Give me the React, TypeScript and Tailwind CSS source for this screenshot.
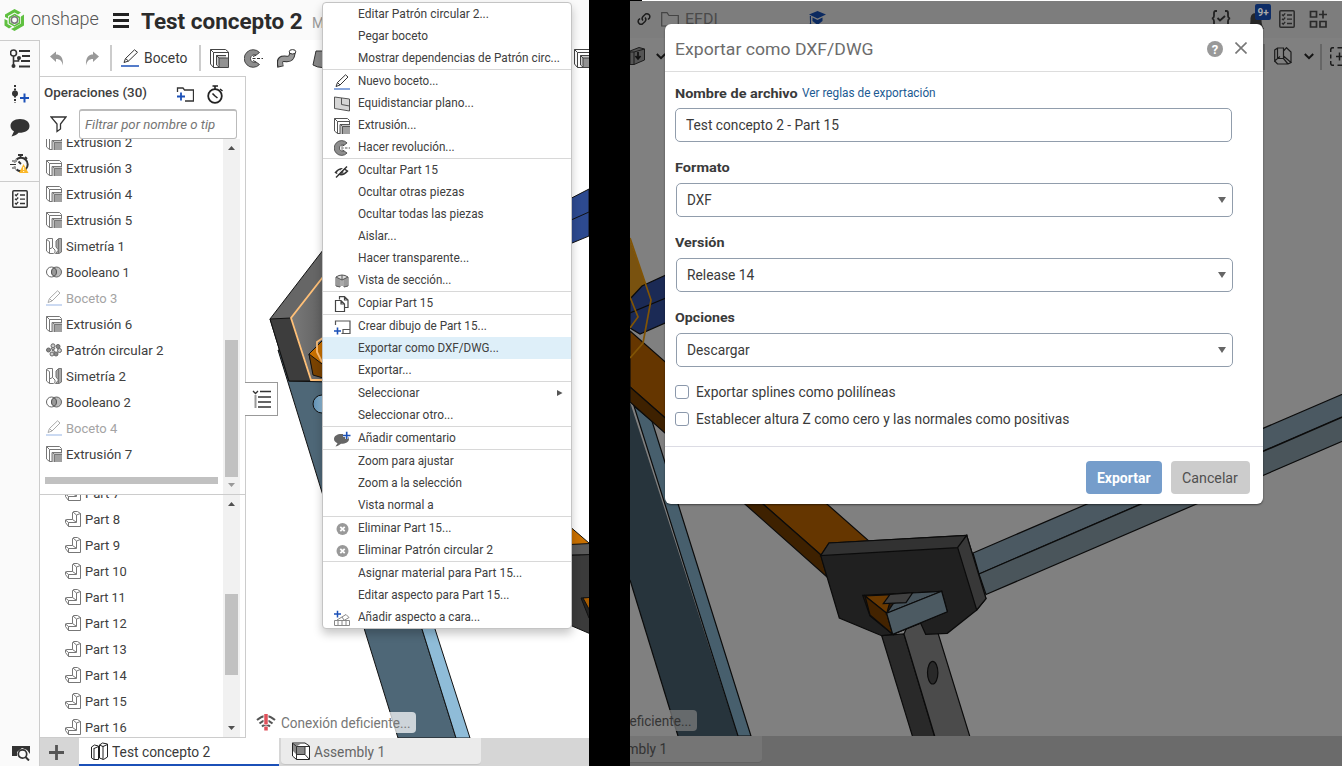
import { useLayoutEffect, useRef, useState } from 'react';
import type { ReactNode } from 'react';

/* Text squeezed or stretched horizontally to a given width. */
function T({ w, children, className = '' }: { w: number; children: ReactNode; className?: string }) {
  const ref = useRef<HTMLSpanElement>(null);
  const [scale, setScale] = useState(1);
  useLayoutEffect(() => {
    if (ref.current) setScale(w / ref.current.offsetWidth);
  }, [w]);
  return (
    <span className={`flex shrink-0 whitespace-nowrap ${className}`} style={{ width: w }}>
      <span ref={ref} className="block shrink-0 origin-left" style={{ transform: `scaleX(${scale})` }}>
        {children}
      </span>
    </span>
  );
}

function Svg({ size = 16, h, children, className = '' }: { size?: number; h?: number; children: ReactNode; className?: string }) {
  return (
    <svg width={size} height={h ?? size} viewBox={`0 0 ${size} ${h ?? size}`} fill="none" className={`shrink-0 ${className}`}>
      {children}
    </svg>
  );
}

const Extrude = ({ line = '#777' }: { line?: string }) => (
  <Svg>
    <path d="M.5 13V.5H13.500L15.500 2.500V6M3.500 15.500V3.500H15.500M.5 .5L3.500 3.500M.5 13L3.500 15.500H6" stroke={line} />
    <path d="M6 6H16V16H6Z" fill="#c4c4c4" />
    <path d="M8.500 8.500H16V16H8.500Z" fill="#a0a0a0" />
    <path d="M6 16V6.500H16M6 6L8.500 8.500M8.500 16V8.500H16" stroke={line} />
  </Svg>
);
const ExtrudeDark = () => (
  <Svg size={19}>
    <path d="M.5 15V.5H15.500L18.500 3V8M3.500 18.500V3.500H18.500M.5 .5L3.500 3.500M.5 15L3.500 18.500H18.500V8" stroke="#444" />
    <path d="M6 6H16V16H6Z" fill="#ccc" />
    <path d="M9 9H18V18H9Z" fill="#929292" />
    <path d="M6.500 16V6.500H16M6.500 6.500L9 9M9 18V9H18M6.500 16L9 18" stroke="#444" />
  </Svg>
);
const Mirror = () => (
  <Svg>
    <path d="M.5 13V1.500L2 .5H6.500V9.500L9 12V14.500L7.500 15.500H3.500L.5 13ZM.5 1.500L3.500 3.500V15.500M6.500 9.500L3.500 11" stroke="#777" />
    <path d="M10 3L12.500 .5H15.500V14L13 15.500H9.500L12.500 12L10 9Z" fill="#aaa" stroke="#777" />
    <path d="M12.500 1V15" stroke="#777" />
  </Svg>
);
const Bool = () => (
  <Svg>
    <circle cx="10.500" cy="8" r="5" fill="#bbb" stroke="#666" />
    <circle cx="5.500" cy="8" r="5" stroke="#666" />
    <path d="M8 3.700A5 5 0 0 1 8 12.300A5 5 0 0 1 8 3.700Z" fill="#999" stroke="#555" />
  </Svg>
);
const Pencil = ({ dark = false }: { dark?: boolean }) => (
  <Svg>
    <path d="M2 12.500L3.500 8.500L11.500.8L14 3L6 11Z M3.500 8.500L6 11" stroke={dark ? '#333' : '#aaa'} />
    <path d="M0 15H16" stroke={dark ? '#3b6cc4' : '#a9c1ea'} strokeWidth="1.200" />
  </Svg>
);
const Pattern = () => (
  <Svg>
    {[[7, 3.800], [12, 4.500], [13.500, 8.500], [10, 12], [6, 12], [2.500, 8]].map(([x, y], i) => (
      <circle key={i} cx={x} cy={y} r="2" fill={i % 2 ? '#888' : '#ccc'} stroke="#666" />
    ))}
    <path d="M5 6L9 10M9 6L6 9" stroke="#777" strokeWidth="1.500" />
  </Svg>
);
const PartIcon = () => (
  <Svg>
    <path d="M.5 9V11.500L3.500 15.500H15.500V2.500L12.500 .5H8.500L7.500 1.500V8.500H2L.5 9L3.500 11.500H11.500V4L15.500 2.500M11.500 4L8 1M3.500 11.500V15.500M7.500 8.500L11 11" stroke="#777" />
  </Svg>
);
const Revolve = ({ s = 16 }: { s?: number }) => (
  <svg width={s} height={s} viewBox="0 0 19 19" fill="none" className="shrink-0">
    <path d="M15.500 3.500A8.800 8.800 0 1 0 15.500 15.500L12 13A3.800 3.800 0 1 1 12 6.200Z" fill="#8d8d8d" stroke="#444" />
    <path d="M8.500 9.500H19" stroke="#333" strokeDasharray="3 1.500" />
    <path d="M9 7.500L12 6.200M9 11.500L12 13" stroke="#333" />
  </svg>
);

const icons: Record<string, () => ReactNode> = {
  ext: () => <Extrude />, mir: Mirror, boo: Bool, pen: () => <Pencil />, pat: Pattern,
};

const features: [string, string, number][] = [
  ['ext', 'Extrusión 2', 66], ['ext', 'Extrusión 3', 66], ['ext', 'Extrusión 4', 66], ['ext', 'Extrusión 5', 66],
  ['mir', 'Simetría 1', 59], ['boo', 'Booleano 1', 64], ['pen', 'Boceto 3', 51], ['ext', 'Extrusión 6', 66],
  ['pat', 'Patrón circular 2', 98], ['mir', 'Simetría 2', 60], ['boo', 'Booleano 2', 65], ['pen', 'Boceto 4', 51],
  ['ext', 'Extrusión 7', 66],
];

const menuIcons: Record<string, ReactNode> = {
  pencil: <Pencil dark />,
  plane: (
    <Svg>
      <path d="M.5 1L15.500 3V15L.5 12.500Z" fill="#d6d6d6" stroke="#555" />
      <path d="M7.500 2V8.500L15.500 10" stroke="#555" />
    </Svg>
  ),
  extrude: <Extrude line="#555" />,
  revolve: <Revolve />,
  hide: (
    <Svg size={15}>
      <path d="M1.500 8.500Q7 2 13.500 7Q8 13.500 1.500 8.500Z" stroke="#333" strokeWidth="1.500" />
      <circle cx="7.500" cy="8" r="2" fill="#555" />
      <path d="M1 12.500L12 2" stroke="#fff" strokeWidth="1.200" />
      <path d="M2 13.500L13 2.500" stroke="#333" strokeWidth="1.500" />
    </Svg>
  ),
  section: (
    <Svg>
      <path d="M2 13V4Q8 0 14 4V13L10 14V6L8 7L6 6V14Z" fill="#ddd" stroke="#555" />
      <path d="M2 4L6 6M14 4L10 6M4 5V13M12 5V13M8 2V7M8 7V13" stroke="#555" />
    </Svg>
  ),
  copy: (
    <Svg>
      <path d="M5.500 3.500V.7H10.500L14 4V11.500H10.500M10.500.7V4H14M1.500 4.500H7L10.500 8V15.500H1.500ZM7 4.500V8H10.500" stroke="#444" strokeWidth="1.200" />
    </Svg>
  ),
  drawing: (
    <Svg size={17}>
      <path d="M1.500 6V2H16V14.500H7.500M9 14V10.500H16" stroke="#555" strokeWidth="1.200" />
      <path d="M0 12H7M3.500 8.500V15.500" stroke="#1b50b8" strokeWidth="1.600" />
    </Svg>
  ),
  comment: (
    <Svg size={17}>
      <path d="M7.500 3C3 3 0 5 0 8C0 10 1.500 11.500 3.500 12.200L1.500 15.500C4.500 15 5.500 14 7 12.800C12 12.800 15 11 15 8C15 5 12 3 7.500 3Z" fill="#666" />
      <path d="M9 4.500H16.500M12.700 .8V8" stroke="#fff" strokeWidth="3" />
      <path d="M9 4.500H16.500M12.700 .8V8" stroke="#1b50b8" strokeWidth="1.600" />
    </Svg>
  ),
  del: (
    <Svg>
      <circle cx="8.500" cy="8" r="6" fill="#999" />
      <path d="M6.300 5.800L10.700 10.200M10.700 5.800L6.300 10.200" stroke="#fff" strokeWidth="1.800" />
    </Svg>
  ),
  aspect: (
    <Svg size={17}>
      <path d="M.5 10.500H15.500V15.500H.5ZM4 10.500V15.500M8 10.500V15.500M12 10.500V15.500M3 10L12 4.500L15 7.500L10 10.500M8 7L10 10" stroke="#888" />
      <path d="M0 4H7M3.500 .8V7.500" stroke="#1b50b8" strokeWidth="1.500" />
    </Svg>
  ),
};

type Item = [string, number, string?];
const menu: Item[][] = [
  [['Editar Patrón circular 2...', 131], ['Pegar boceto', 70], ['Mostrar dependencias de Patrón circ...', 202]],
  [['Nuevo boceto...', 80, 'pencil'], ['Equidistanciar plano...', 116, 'plane'], ['Extrusión...', 58, 'extrude'], ['Hacer revolución...', 97, 'revolve']],
  [['Ocultar Part 15', 80, 'hide'], ['Ocultar otras piezas', 106], ['Ocultar todas las piezas', 126], ['Aislar...', 39], ['Hacer transparente...', 111], ['Vista de sección...', 93, 'section']],
  [['Copiar Part 15', 75, 'copy']],
  [['Crear dibujo de Part 15...', 129, 'drawing'], ['Exportar como DXF/DWG...', 141], ['Exportar...', 54]],
  [['Seleccionar', 62], ['Seleccionar otro...', 95]],
  [['Añadir comentario', 98, 'comment']],
  [['Zoom para ajustar', 96], ['Zoom a la selección', 104], ['Vista normal a', 76]],
  [['Eliminar Part 15...', 93, 'del'], ['Eliminar Patrón circular 2', 135, 'del']],
  [['Asignar material para Part 15...', 164], ['Editar aspecto para Part 15...', 151], ['Añadir aspecto a cara...', 122, 'aspect']],
];

function ContextMenu() {
  return (
    <div className="absolute left-[322px] top-[2px] z-20 w-[250px] rounded-[4px] border border-[#c4c4c4] bg-white text-[13px] leading-[22px] text-[#404040] shadow-[0_5px_10px_rgba(0,0,0,.22)]">
      {menu.map((group, g) => (
        <div key={g} className={g ? 'border-t border-[#d8d8d8]' : ''}>
          {group.map(([label, w, icon]) => (
            <div key={label} className={`flex h-[22px] items-center pl-[11px] ${label.includes('DXF') ? 'bg-[#deeff9]' : ''}`}>
              <div className="flex w-[24px] shrink-0 pt-[2px]">{icon ? menuIcons[icon] : null}</div>
              <T w={w}>{label}</T>
              {label === 'Seleccionar' && (
                <Svg size={6} className="mr-[8px] ml-auto"><path d="M0 0L5.500 3L0 6Z" fill="#555" /></Svg>
              )}
            </div>
          ))}
        </div>
      ))}
    </div>
  );
}

function Scrollbar({ className, thumb, dim = false }: { className: string; thumb: string; dim?: boolean }) {
  return (
    <div className={`flex w-[17px] shrink-0 flex-col items-center bg-[#f1f1f1] ${className}`}>
      <Svg size={7} h={4}><path d="M0 4L3.500 0L7 4Z" fill="#505050" /></Svg>
      <div className={`w-[13px] bg-[#c1c1c1] ${thumb}`} />
      <Svg size={7} h={4} className="mt-auto"><path d="M0 0L3.500 4L7 0Z" fill={dim ? '#999' : '#505050'} /></Svg>
    </div>
  );
}

function LeftRail() {
  return (
    <aside className="flex w-[40px] shrink-0 flex-col items-center border-t border-r border-[#ccc] bg-[#fafafa]">
      <Svg size={20} h={19} className="mt-[8px]">
        <circle cx="3.500" cy="4" r="3" stroke="#333" strokeWidth="1.600" />
        <path d="M3.500 7V18M3.500 12H8.500V8" stroke="#333" strokeWidth="1.600" />
        <path d="M9 2H20M12 7H20M11 12H20M9 17.500H20" stroke="#333" strokeWidth="1.800" />
        <circle cx="3.500" cy="17" r="2" fill="#333" /><circle cx="9" cy="9" r="2" fill="#333" />
      </Svg>
      <Svg size={18} h={20} className="mt-[16px] ml-[1px]">
        <path d="M4 1V19" stroke="#333" strokeWidth="2" strokeDasharray="2 1.500" />
        <circle cx="4" cy="9.500" r="3" fill="#333" />
        <path d="M9 14H18M13.500 9.500V18.500" stroke="#1b50b8" strokeWidth="2" />
      </Svg>
      <Svg size={20} h={18} className="mt-[15px]">
        <path d="M10 0C4 0 .5 3 .5 7C.5 9.500 2 11.300 4 12.300L1.500 17.500C5 16.800 7 15.500 8.500 13.800C15 14 19.500 11.500 19.500 7C19.500 3 16 0 10 0Z" fill="#333" />
      </Svg>
      <Svg size={19} h={19} className="mt-[17px]">
        <circle cx="11" cy="10.500" r="6.700" stroke="#333" strokeWidth="2" />
        <path d="M8 1H13M10.500 1V4M15 3L17 5M11 10L8.500 7.500" stroke="#333" strokeWidth="1.800" />
        <path d="M1 7H7M0 10.500H7M1 14H7" stroke="#fafafa" strokeWidth="3" />
        <path d="M2 7H7M0 10.500H6M2 14H6" stroke="#333" strokeWidth="1.200" />
        <path d="M13.500 10L18.500 19H9Z" fill="#fbb829" /><path d="M13.700 13V16M13.700 17V18" stroke="#fff" />
      </Svg>
      <div className="mt-[8px] h-px w-full bg-[#ccc]" />
      <Checklist color="#333" className="mt-[8px]" />
      <Svg size={18} h={15} className="mt-auto mb-[5px] ml-[2px]">
        <path d="M0 0H18V8L15 4L10 2L5 6V10H0Z" fill="#333" />
        <circle cx="10.500" cy="8" r="4.200" stroke="#333" strokeWidth="1.700" fill="#fafafa" />
        <path d="M13.500 11L17 14.500" stroke="#333" strokeWidth="2" />
      </Svg>
    </aside>
  );
}

function Checklist({ color, className = '' }: { color: string; className?: string }) {
  return (
    <Svg size={16} h={18} className={className}>
      <rect x=".8" y=".8" width="14.400" height="16.400" rx="1" stroke={color} strokeWidth="1.500" />
      <path d="M3 4.500L4.200 5.700L6.200 3.300M3 8.700L4.200 9.900L6.200 7.500M3 13L4.200 14.200L6.200 11.800M8 5H13M8 9.200H13M8 13.500H13" stroke={color} strokeWidth="1.300" />
    </Svg>
  );
}

function FeaturePanel() {
  return (
    <section className="flex w-[206px] shrink-0 flex-col border-y border-r border-[#ccc] bg-white text-[13.500px] text-[#404040]">
      <div className="flex h-[32px] shrink-0 items-center pl-[4px] text-[13px] font-medium">
        <T w={103}>Operaciones (30)</T>
        <Svg size={18} h={15} className="mt-[3px] ml-[29px]">
          <path d="M1.500 5V1H7L8.500 3H17.500V14H9" stroke="#333" strokeWidth="1.300" />
          <path d="M1 9.500H9M5 5.500V13.500" stroke="#1b50b8" strokeWidth="1.800" />
        </Svg>
        <Svg size={17} h={19} className="mt-[2px] ml-[13px]">
          <circle cx="8" cy="11" r="6.800" stroke="#222" strokeWidth="1.800" />
          <path d="M5.500 1H11M8 1V4M13 4L15.500 6M8 11L5.500 8.500M8 11L10.500 13" stroke="#222" strokeWidth="1.600" />
        </Svg>
      </div>
      <div className="flex h-[30px] shrink-0 items-center pl-[10px]">
        <Svg size={17}><path d="M1 1H16L10.500 8V13L7 15.500V8Z" stroke="#333" strokeWidth="1.300" /></Svg>
        <div className="ml-[12px] flex h-[30px] w-[158px] items-center rounded-[3px] border border-t-2 border-[#bbb] pl-[5px] text-[13px] text-[#757575] italic">
          <T w={130}>Filtrar por nombre o tip</T>
        </div>
      </div>
      <div className="flex h-[356px] shrink-0 border-b border-[#ccc]">
        <div className="flex w-[183px] flex-col overflow-hidden">
          <div className="-mt-[10px]">
            {features.map(([icon, label, w]) => {
              const Icon = icons[icon];
              return (
                <div key={label} className={`flex h-[26px] items-center gap-[4px] pl-[6px] ${icon === 'pen' ? 'text-[#a4a4a4]' : ''}`}>
                  <Icon />
                  <T w={w}>{label}</T>
                </div>
              );
            })}
          </div>
          <div className="mt-[10px] ml-[5px] h-[7px] w-[173px] bg-[#c1c1c1]" />
        </div>
        <Scrollbar className="pt-[7px] pb-[7px]" thumb="h-[137px] mt-[190px]" dim />
      </div>
      <div className="flex h-[242px] shrink-0 overflow-hidden">
        <div className="w-[183px] overflow-hidden">
          <div className="-mt-[15px]">
            {[7, 8, 9, 10, 11, 12, 13, 14, 15, 16].map((n) => (
              <div key={n} className="flex h-[26px] items-center gap-[5px] pl-[25px]">
                <PartIcon />
                <T w={n < 10 ? 35 : n === 11 ? 41 : 42} className="-ml-[1px]">{`Part ${n}`}</T>
              </div>
            ))}
          </div>
        </div>
        <Scrollbar className="pt-[7px] pb-[7px]" thumb="h-[81px] mt-[88px]" />
      </div>
    </section>
  );
}

function LeftScene() {
  return (
    <svg viewBox="246 76 343 662" width="343" height="662" className="block" stroke="#111" strokeWidth="1">
      <defs>
        <linearGradient id="face" x1="0" x2="1"><stop offset="0" stopColor="#7a7a7a" /><stop offset="1" stopColor="#5c5c5c" /></linearGradient>
        <linearGradient id="hole" x1="0" x2="1"><stop offset="0" stopColor="#5f90b4" /><stop offset="1" stopColor="#b8dcf2" /></linearGradient>
      </defs>
      <path d="M320 350L422 629L456 738H398L278 350Z" fill="#4e6777" />
      <path d="M380 500L422 629L456 738H470L435 629L400 500Z" fill="#8fbcd8" />
      <circle cx="322" cy="404" r="9" fill="url(#hole)" />
      <path d="M270 319L330 241V382L289 381Z" fill="#666" />
      <path d="M270 319L291 318L311 381H289Z" fill="#3d3d3d" />
      <path d="M330 268L291 318L311 381H330Z" fill="url(#face)" stroke="none" />
      <path d="M330 333L309 354L313 372L330 380Z" fill="#c87000" />
      <path d="M309 354L330 370V380L313 375Z" fill="#7a4300" />
      <path d="M330 268L291 318L311 380H330M330 333L317 342V352L322 362" fill="none" stroke="#ffc078" strokeWidth="1.800" />
      <path d="M560 204L589 189V236L560 248Z" fill="#2d4a90" />
      <path d="M560 225L589 212" />
      <path d="M560 518L589 543V546H560Z" fill="#c97000" />
      <path d="M560 545L600 543V555H560Z" fill="#5b5b5b" />
      <path d="M560 556L600 554V638L572 626L560 620Z" fill="#3b3b3b" />
      <path d="M581 598L600 597V630L589 618Z" fill="#222" />
      <path d="M583 598L595 597V620Z" fill="#a85c00" />
    </svg>
  );
}

function LeftApp() {
  return (
    <div className="relative flex h-[766px] w-[589px] shrink-0 flex-col overflow-hidden bg-white">
      <header className="flex h-[40px] shrink-0 items-center bg-[#fafafa] pl-[4px]">
        <Svg size={21} h={22}>
          <path d="M10.500 0L1 5.500V8L4 9.500V7L10.500 3.500L14 5.500L17 3.500ZM20 5.500V16.500L10.500 22L7 20L10 18.500L17 14.500V7.500ZM.5 10V16.500L5 19.500L8 17.500L3.500 15V11.500Z" fill="#5fc040" />
          <path d="M10.500 5.500L15.500 8.500V14L10.500 16.800L5.500 14V8.500Z" stroke="#5fc040" strokeWidth="1.500" />
          <circle cx="10.500" cy="11" r="3.200" stroke="#777" strokeWidth="1.500" />
        </Svg>
        <T w={68} className="-mt-[2px] ml-[6px] text-[18.500px] leading-[22px] font-light text-[#555]">onshape</T>
        <div className="ml-[14px] flex flex-col gap-[3px]">
          <div className="h-[3px] w-[16px] bg-[#222]" /><div className="h-[3px] w-[16px] bg-[#222]" /><div className="h-[3px] w-[16px] bg-[#222]" />
        </div>
        <T w={162} className="mt-[3px] ml-[12px] text-[21.500px] leading-[26px] font-bold text-[#2b2b2b]">Test concepto 2</T>
        <T w={12} className="mt-[6px] ml-[9px] text-[15px] text-[#999]">M</T>
      </header>
      <div className="flex min-h-0 flex-1">
        <LeftRail />
        <div className="flex min-w-0 flex-1 flex-col">
          <div className="flex h-[36px] shrink-0 items-center pl-[10px]">
            <Svg size={14} h={15}><path d="M0 5.500L6 .5V3.500C10 3.500 13.500 6 13 14.500C12 10 10 8 6 8V11Z" fill="#999" /></Svg>
            <Svg size={14} h={15} className="ml-[21px]"><path d="M14 5.500L8 .5V3.500C4 3.500 .5 6 1 14.500C2 10 4 8 8 8V11Z" fill="#999" /></Svg>
            <div className="ml-[11px] h-[26px] w-[2px] bg-[#ccc]" />
            <Svg size={18} h={18} className="ml-[9px]">
              <path d="M3 13.500L4.500 9.500L13.500 .8L16.500 3.300L7.500 12Z M4.500 9.500L7.500 12" stroke="#333" />
              <path d="M0 17H18" stroke="#1b50b8" strokeWidth="1.500" />
            </Svg>
            <T w={43} className="mt-[2px] ml-[5px] text-[14.500px] text-[#3a3a3a]">Boceto</T>
            <div className="ml-[12px] h-[26px] w-[2px] bg-[#ccc]" />
            <div className="ml-[9px]"><ExtrudeDark /></div>
            <div className="ml-[15px]"><Revolve s={19} /></div>
            <Svg size={20} h={19} className="ml-[14px]">
              <path d="M3.500 18C1.500 9 5 9.500 10 10C14 10 15 8 15.500 3.500" stroke="#333" strokeWidth="6.500" />
              <path d="M3.700 17C2 9.500 5 9.500 10 10C14 10 15 8 15.500 3" stroke="#999" strokeWidth="4.500" />
              <ellipse cx="15.500" cy="2.800" rx="3.300" ry="2.200" fill="#fff" stroke="#333" />
            </Svg>
            <Svg size={20} h={19} className="ml-[15px]"><path d="M4 2L1 16Q10 21 19 16L16 2Z" fill="#888" stroke="#333" /></Svg>
            <div className="ml-auto w-[15px] overflow-hidden"><ExtrudeDark /></div>
          </div>
          <div className="flex min-h-0 flex-1">
            <FeaturePanel />
            <LeftScene />
          </div>
          <div className="flex h-[28px] shrink-0 bg-[#d6d6d6] text-[14.500px]">
            <div className="flex w-[39px] items-center justify-center pr-[6px]">
              <Svg size={15}><path d="M0 7.500H15M7.500 0V15" stroke="#555" strokeWidth="2.800" /></Svg>
            </div>
            <div className="flex h-[28px] w-[200px] items-center border-b-2 border-[#1b50b8] bg-white pl-[12px] text-[#3a3a3a]">
              <Svg size={17} h={19}>
                <path d="M.5 5L3.500 3L7.500 4V17.500H3L.5 16ZM3 6.500L7.500 4.500M3 6V17.500M8.500 3L11.500 1L16.500 2V15L12.500 17.500L8.500 16ZM12 4.500L16.500 2.500M12 4V17.500M8.500 3L12 4.500" stroke="#222" />
              </Svg>
              <T w={98} className="mt-[3px] ml-[4px]">Test concepto 2</T>
            </div>
            <div className="ml-[2px] flex h-[27px] w-[200px] items-center rounded-b-[4px] border-b border-[#c4c4c4] bg-[#ebebeb] pl-[11px] text-[#666]">
              <Svg size={18} h={18}>
                <path d="M.5 1L13 1L17.500 4V17.500H4.500L.5 14Z" fill="#fff" stroke="#222" />
                <path d="M4.500 4.500H13V12.500H4.500L1 9V1H10Z" fill="#888" />
                <path d="M.5 1L4.500 4.500H17.500M4.500 4.500V17.500M13 4.500V12.500H4.500M13 12.500L17 17" stroke="#333" />
              </Svg>
              <T w={71} className="mt-[3px] ml-[4px]">Assembly 1</T>
            </div>
          </div>
        </div>
      </div>
      <div className="absolute top-[382px] left-[245px] flex h-[34px] w-[33px] items-center justify-center border border-l-0 border-[#999] bg-white">
        <Svg size={19} h={18}>
          <path d="M1 1L3.500 3.500L6 1M8 1.500H19M6 7H19M6 12H19M6 17H19" stroke="#333" strokeWidth="1.300" />
          <path d="M3.500 5V18" stroke="#999" strokeWidth="2" />
        </Svg>
      </div>
      <div className="absolute top-[712px] left-[252px] flex h-[21px] w-[164px] items-center rounded-[4px] bg-[rgba(255,255,255,.72)] pl-[4px] text-[14.500px] text-[#777]">
        <Svg size={20} h={17}>
          <path d="M1 6Q10-2 19 6M3.500 9.500Q10 3.500 16.500 9.500M6 12.500Q10 8.500 14 12.500" stroke="#555" strokeWidth="2" />
          <path d="M10 0V11M10 13V16.500" stroke="#fff" strokeWidth="5" />
          <path d="M10 0V10.500M10 12.500V16.500" stroke="#e0505a" strokeWidth="3.500" />
        </Svg>
        <T w={130} className="mt-[2px] ml-[5px]">Conexión deficiente...</T>
      </div>
      <ContextMenu />
    </div>
  );
}

function RightScene() {
  return (
    <svg viewBox="630 75 712 661" width="712" height="661" className="block" stroke="#0b0b0b" strokeWidth="1.200">
      <path d="M630 240L646 285L630 300Z" fill="#79520f" stroke="none" />
      <path d="M630 299L642 286L690 264V312L640 334L630 328Z" fill="#1b2a55" />
      <path d="M630 313L690 288" />
      <path d="M630 402L738 736H678L630 580Z" fill="#27343c" stroke="none" />
      <path d="M630 580L678 736" />
      <path d="M634 406L652 421L751 736H738Z" fill="#475f6d" />
      <path d="M630 331L869 541L829 562L630 387Z" fill="#653600" />
      <path d="M630 387L821 555L827 577L630 402Z" fill="#3e2100" />
      <path d="M630 238L651 300L643 343L630 358M630 297L638 317L630 328" fill="none" stroke="#815405" strokeWidth="1.700" />
      <path d="M1350 391L973 553L979 574L1350 413.500Z" fill="#4b5962" />
      <path d="M1350 414L979 574L986 594.500L1350 438Z" fill="#4a555b" />
      <path d="M881.700 635.700L904 634L934.700 737H912.700Z" fill="#292929" />
      <path d="M904 634L910 620L921 618L938 633L970 737H935Z" fill="#4b4b4b" />
      <ellipse cx="932.700" cy="672.700" rx="5.200" ry="11.300" fill="#292929" />
      <path d="M820.700 555.700L829 543L966.700 535.300L986 598.700L976.700 610L947.300 633.300L925.700 634.300L920.700 623.300L892.700 634.300L881.700 635.700L839.300 618Z" fill="#202020" />
      <path d="M820.700 555.700L829 543L966.700 535.300L957.700 547.700Z" fill="#323232" />
      <path d="M966.700 535.300L986 598.700L976.700 610L957.700 547.700Z" fill="#383838" />
      <path d="M862.700 595.300L941.700 591.300L947.300 611.700L892.700 634.300L870 616Z" fill="#2a1a0c" />
      <path d="M865 596L892 594.700L886.700 613.300Z" fill="#6a3900" />
      <path d="M865 596L886.700 613.300L892.700 634.300L870 615Z" fill="#432300" />
      <path d="M886.700 613.300L893 604L912 593L941.700 591.300Z" fill="#46535b" />
      <path d="M886.700 613.300L941.700 591.300L947.300 611.700L892.700 634.300Z" fill="#4c5a62" />
      <path d="M890 594.300L912.700 592.700L906 602.700L883.300 603.700Z" fill="#404040" />
    </svg>
  );
}

function Select({ label, w, value, vw }: { label: string; w: number; value: string; vw: number }) {
  return (
    <div className="mt-[15px] flex h-[60px] flex-col">
      <div className="flex h-[20px] items-center text-[13.500px] font-bold"><T w={w}>{label}</T></div>
      <div className="mt-[6px] ml-[1px] flex h-[34px] w-[557px] shrink-0 items-center rounded-[5px] border border-[#919dac] pr-[6px] pl-[10px]">
        <T w={vw}>{value}</T>
        <Svg size={8} h={6} className="ml-auto"><path d="M0 0H8L4 6Z" fill="#666" /></Svg>
      </div>
    </div>
  );
}

function Modal() {
  return (
    <div className="absolute top-[24px] left-[35px] flex h-[480px] w-[598px] flex-col rounded-[6px] bg-white text-[14px] text-[#3a3a3a] shadow-[0_1px_2px_rgba(0,0,0,.5)]">
      <div className="flex h-[48px] shrink-0 items-center border-b border-[#ddd] pt-[3px] pr-[16px] pl-[10px]">
        <T w={199} className="text-[17px] leading-[22px] text-[#6c6c6c]">Exportar como DXF/DWG</T>
        <div className="ml-auto flex h-[16px] w-[16px] items-center justify-center rounded-full bg-[#999] text-[13px] leading-none font-bold text-white">?</div>
        <Svg size={12} className="ml-[12px] mb-[2px]"><path d="M.5 .5L11.500 11.500M11.500 .5L.5 11.500" stroke="#777" strokeWidth="1.600" /></Svg>
      </div>
      <div className="flex h-[375px] shrink-0 flex-col border-b border-[#dcdce4] pl-[10px]">
        <div className="mt-[11px] flex h-[20px] items-center gap-[4px]">
          <T w={123} className="text-[13.500px] font-bold">Nombre de archivo</T>
          <T w={134} className="mt-[1px] text-[12.500px] text-[#1b5a92]">Ver reglas de exportación</T>
        </div>
        <div className="mt-[5px] flex h-[34px] w-[557px] shrink-0 items-center rounded-[5px] border border-[#919dac] pl-[10px]">
          <T w={153}>Test concepto 2 - Part 15</T>
        </div>
        <Select label="Formato" w={55} value="DXF" vw={25} />
        <Select label="Versión" w={49} value="Release 14" vw={67} />
        <Select label="Opciones" w={60} value="Descargar" vw={63} />
        <div className="mt-[12px] flex h-[27px] items-center gap-[7px]">
          <div className="mb-[2px] h-[14px] w-[14px] rounded-[3px] border border-[#8b98ab]" />
          <T w={200}>Exportar splines como polilíneas</T>
        </div>
        <div className="flex h-[27px] items-center gap-[7px]">
          <div className="mb-[2px] h-[14px] w-[14px] rounded-[3px] border border-[#8b98ab]" />
          <T w={373}>Establecer altura Z como cero y las normales como positivas</T>
        </div>
      </div>
      <div className="flex justify-end gap-[9px] pt-[14px] pr-[13px] text-[14.500px]">
        <button className="flex h-[33px] w-[76px] items-center justify-center rounded-[4px] bg-[#759dcb] pt-[2px] font-bold text-white"><T w={54}>Exportar</T></button>
        <button className="flex h-[33px] w-[79px] items-center justify-center rounded-[4px] bg-[#ccc] pt-[2px] pr-[1px] text-[#505050]"><T w={56}>Cancelar</T></button>
      </div>
    </div>
  );
}

const Caret = ({ className = '' }: { className?: string }) => (
  <Svg size={10} h={7} className={className}><path d="M.8 1L5 5.200L9.200 1" stroke="#151515" strokeWidth="2" /></Svg>
);

function RightApp() {
  return (
    <div className="relative flex h-[766px] w-[712px] shrink-0 flex-col overflow-hidden bg-[#808080]">
      <div className="flex h-px shrink-0"><div className="w-[12px] bg-black" /><div className="flex-1 bg-white" /></div>
      <div className="flex h-[37px] shrink-0 items-center bg-[#7d7d7d] pl-[7px]">
        <Svg size={14} h={14} className="mb-[1px]">
          <path d="M6 8.500A3 3 0 0 1 6 4.500L8.500 2A3 3 0 0 1 12.500 6L11 7.500M8 5.500A3 3 0 0 1 8 9.500L5.500 12A3 3 0 0 1 1.500 8L3 6.500" stroke="#1c1c1c" strokeWidth="1.500" />
        </Svg>
        <Svg size={18} h={15} className="mb-[1px] ml-[10px]"><path d="M.7 14V.7H6L8 3.500H17.300V14Z" stroke="#444" strokeWidth="1.200" /></Svg>
        <T w={33} className="mb-[2px] ml-[6px] text-[15px] leading-[20px] text-[#4a4a4a]">EFDI</T>
        <Svg size={17} h={16} className="mb-[1px] ml-[91px]">
          <path d="M8.500 0L17 3.500L8.500 7.500L0 3.500ZM3.500 6.500L8.500 9L13.500 6.500V10L8.500 14L3.500 10ZM.8 5H2V12L3 15H0L1 12Z" fill="#0c2a60" />
        </Svg>
        <Svg size={20} h={18} className="mr-[17px] mb-[1px] ml-auto">
          <path d="M6 1H4.500Q3 1 3 3V6Q3 8 1 8.500Q3 9 3 11V14Q3 16 5 16M14 1H15.500Q17 1 17 3V6Q17 8 19 8.500Q17 9 17 11V14Q17 16 15 16M6.500 8L9 10.500L14 6" stroke="#222" strokeWidth="1.800" />
        </Svg>
        <div className="relative flex w-[23px] shrink-0 self-end">
          <Svg size={16} h={26}><path d="M8 1C3.500 1 2.500 4 2.500 8C2.500 12 1.500 14 0 17H16C14.500 14 13.500 12 13.500 8C13.500 4 12.500 1 8 1Z" fill="#272727" /></Svg>
          <div className="absolute -top-[8px] left-[7px] flex h-[16px] w-[16px] items-center justify-center rounded-[2px] bg-[#0d2c66] text-[10px] font-bold text-[#aaa]">9+</div>
        </div>
        <Checklist color="#2a2a2a" className="mb-[1px] ml-[8px]" />
        <Svg size={19} h={19} className="mr-[14px] mb-[1px] ml-[14px]">
          <path d="M1.500 1.500H7.500V7H1.500ZM1.500 11.500H7.500V17H1.500ZM11 11.500H17V17H11ZM10 4.500H18M14 .5V8.500" stroke="#2a2a2a" strokeWidth="1.700" />
        </Svg>
      </div>
      <div className="flex h-[37px] shrink-0 items-center">
        <Svg size={15} h={18} className="mb-[2px]">
          <path d="M0 4L9 .5L14.500 2V13L4 17.500H0Z" fill="#555" stroke="#1c1c1c" />
          <path d="M0 5H4V17.500M4 5L14.500 2" stroke="#1c1c1c" /><path d="M8 5V11M5.500 9L8 12L10.500 9" stroke="#111" strokeWidth="1.700" />
        </Svg>
        <Caret className="ml-[11px]" />
        <div className="ml-auto h-[26px] w-[2px] bg-[#666]" />
        <Svg size={18} h={18} className="mb-[2px] ml-[9px]">
          <path d="M.7 3L3.500 1H9.500V11.500H3.500L.7 14ZM3.500 1V11.500M.7 14L3.500 17H14L17 15.500L9.500 9M3.500 11.500L6 9.500M9.500 4L12.500 .7L17 5V15.500M9.500 11.500L14 17" stroke="#1c1c1c" strokeWidth="1.200" />
        </Svg>
        <Caret className="ml-[12px]" />
        <div className="ml-[6px] h-[26px] w-[2px] bg-[#666]" />
        <Svg size={12} h={19} className="ml-[8px]">
          <path d="M4 .7H2.500Q.7 .7 .7 3V5M.7 7.500V11.500M.7 14V16Q.7 18.300 2.500 18.300H4M7.500 .7H12M7.500 18.300H12M6 9.500H12M9.500 5.500V13.500" stroke="#1c1c1c" strokeWidth="1.500" />
        </Svg>
      </div>
      <RightScene />
      <div className="flex h-[30px] shrink-0 bg-[#6b6b6b] text-[14.500px] text-[#333]">
        <div className="flex h-[27px] w-[132px] justify-start overflow-hidden rounded-br-[4px] border-b border-[#626262] bg-[#757575] leading-[28px]">
          <T w={71} className="-ml-[34px]">Assembly 1</T>
        </div>
      </div>
      <div className="absolute top-[710px] left-0 flex h-[21px] w-[67px] items-center overflow-hidden rounded-r-[4px] bg-[rgba(128,128,128,.72)] pt-[2px] text-[14.500px] text-[#353535]">
        <T w={130} className="-ml-[68px]">Conexión deficiente...</T>
      </div>
      <Modal />
    </div>
  );
}

export default function App() {
  return (
    <main className="flex h-[766px] w-[1342px] overflow-hidden bg-black font-[Roboto,sans-serif]">
      <LeftApp />
      <div className="w-[41px] shrink-0 bg-black" />
      <RightApp />
    </main>
  );
}
